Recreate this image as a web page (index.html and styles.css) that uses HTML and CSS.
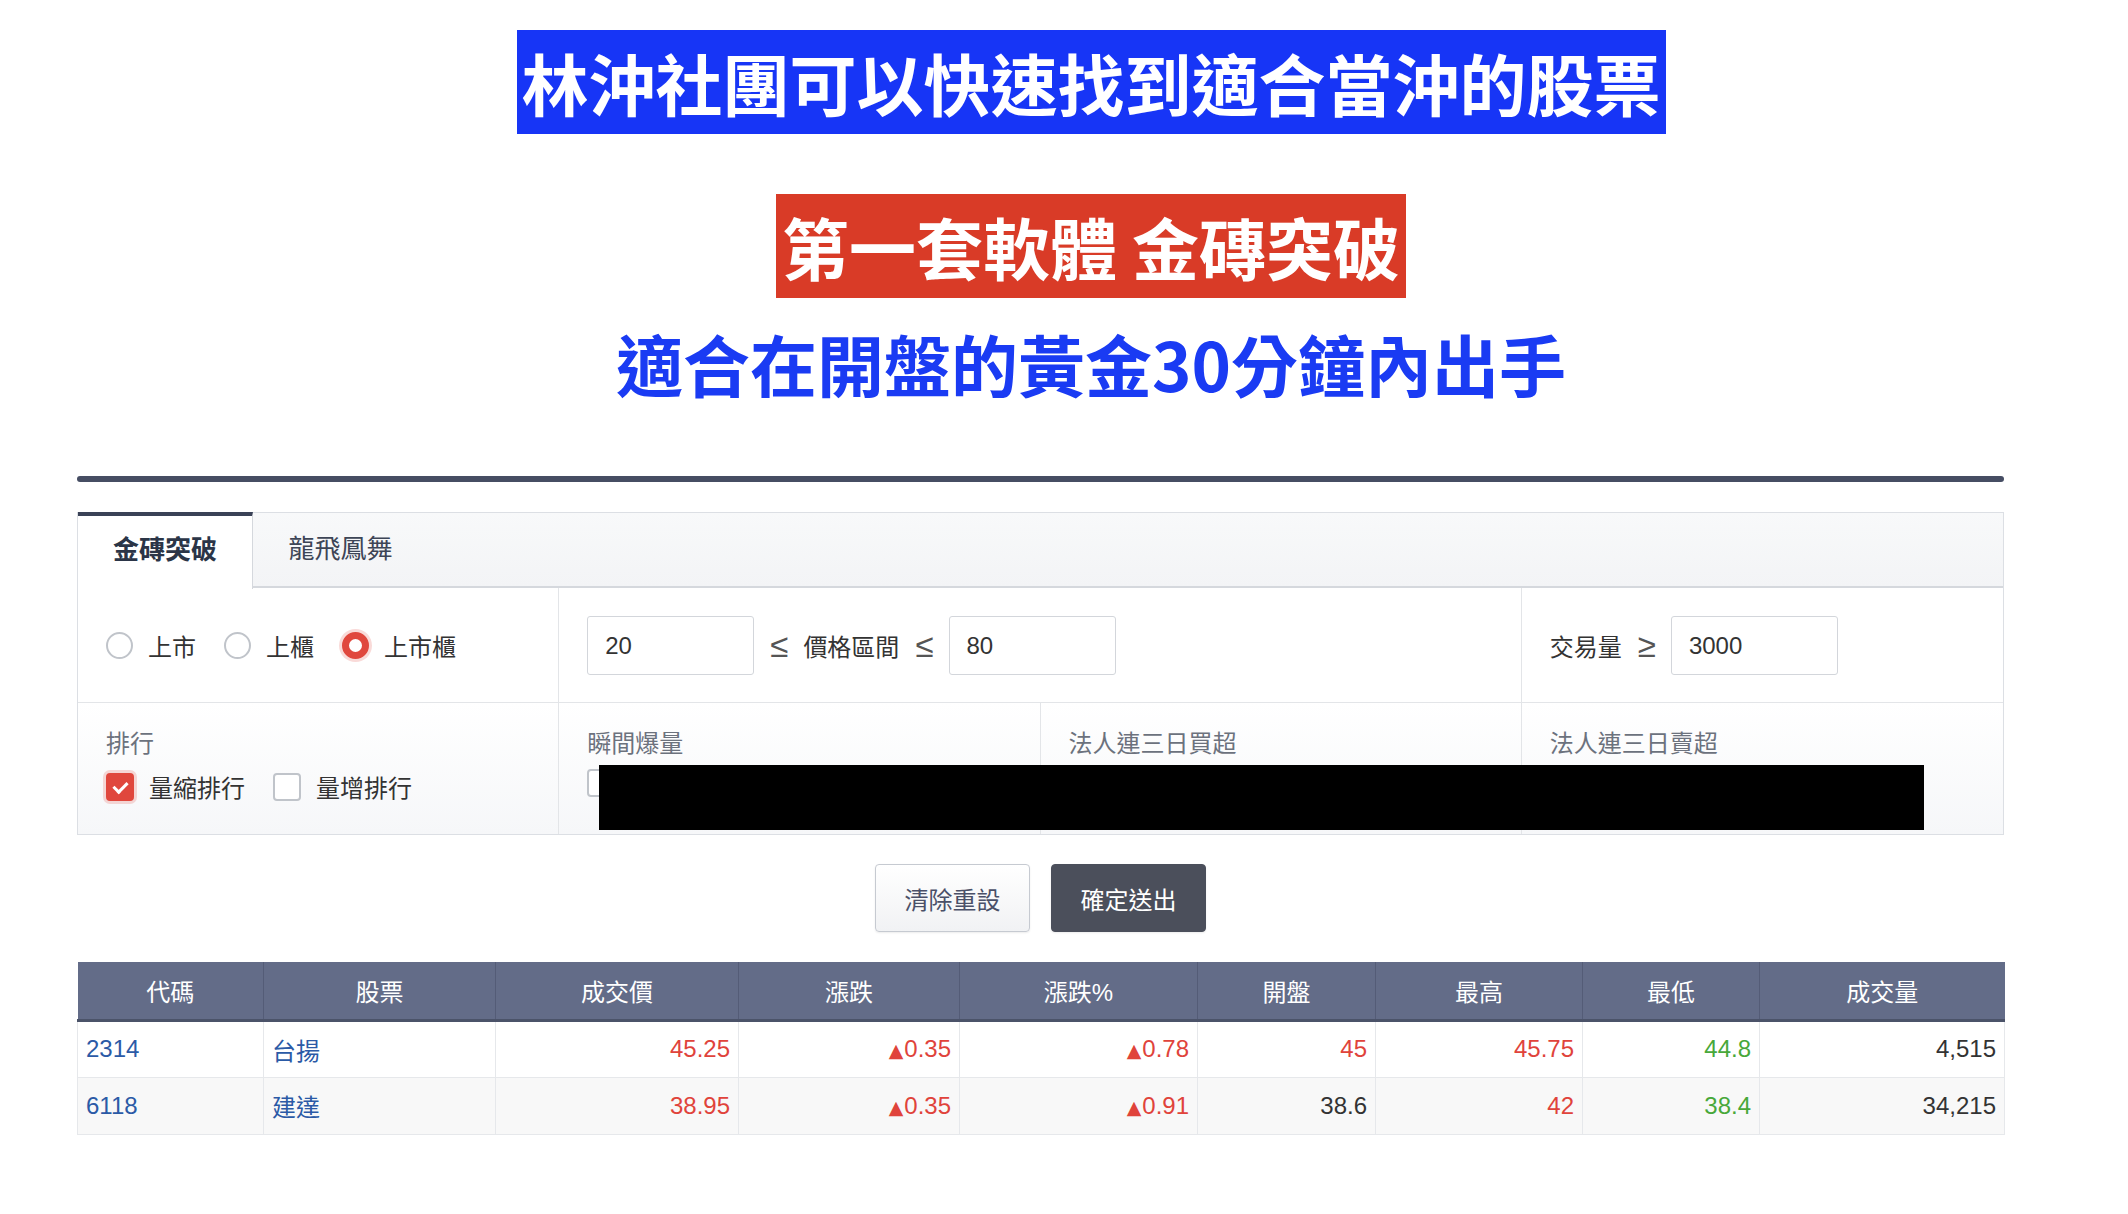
FILE: index.html
```html
<!DOCTYPE html>
<html lang="zh-Hant">
<head>
    <meta charset="UTF-8">
    <meta name="viewport" content="width=device-width, initial-scale=1.0">
    <title>金磚突破 選股</title>
    <link rel="stylesheet" href="styles.css">
</head>
<body>
    <div class="hero">
        <div class="hero-blue">林沖社團可以快速找到適合當沖的股票</div>
        <div class="hero-red">第一套軟體 金磚突破</div>
        <div class="hero-sub">適合在開盤的黃金30分鐘內出手</div>
    </div>

    <div class="wrap">
        <div class="divider"></div>

        <div class="panel">
            <div class="tabs">
                <div class="tab active">金磚突破</div>
                <div class="tab">龍飛鳳舞</div>
            </div>

            <div class="filters">
                <div class="cell">
                    <label class="radio"><span class="dot"></span>上市</label>
                    <label class="radio"><span class="dot"></span>上櫃</label>
                    <label class="radio"><span class="dot on"></span>上市櫃</label>
                </div>
                <div class="cell span2">
                    <div class="field">20</div>
                    <span class="op">≤</span>
                    <span class="txt">價格區間</span>
                    <span class="op">≤</span>
                    <div class="field">80</div>
                </div>
                <div class="cell">
                    <span class="txt">交易量</span>
                    <span class="op">≥</span>
                    <div class="field">3000</div>
                </div>

                <div class="cell sub">
                    <div class="sub-title">排行</div>
                    <div class="checks">
                        <label class="check"><span class="box on"></span>量縮排行</label>
                        <label class="check"><span class="box"></span>量增排行</label>
                    </div>
                </div>
                <div class="cell sub">
                    <div class="sub-title">瞬間爆量</div>
                    <div class="checks">
                        <label class="check"><span class="box"></span></label>
                    </div>
                </div>
                <div class="cell sub">
                    <div class="sub-title">法人連三日買超</div>
                </div>
                <div class="cell sub">
                    <div class="sub-title">法人連三日賣超</div>
                </div>
            </div>

            <!-- redacted area in the original capture -->
            <div class="redact"></div>
        </div>

        <div class="actions">
            <button class="btn">清除重設</button>
            <button class="btn dark">確定送出</button>
        </div>

        <table class="result">
            <colgroup>
                <col style="width:186px">
                <col style="width:232px">
                <col style="width:243px">
                <col style="width:221px">
                <col style="width:238px">
                <col style="width:178px">
                <col style="width:207px">
                <col style="width:177px">
                <col style="width:245px">
            </colgroup>
            <thead>
                <tr>
                    <th>代碼</th>
                    <th>股票</th>
                    <th>成交價</th>
                    <th>漲跌</th>
                    <th>漲跌%</th>
                    <th>開盤</th>
                    <th>最高</th>
                    <th>最低</th>
                    <th>成交量</th>
                </tr>
            </thead>
            <tbody>
                <tr>
                    <td class="link">2314</td>
                    <td class="link">台揚</td>
                    <td class="num up">45.25</td>
                    <td class="num up"><span class="tri">▲</span>0.35</td>
                    <td class="num up"><span class="tri">▲</span>0.78</td>
                    <td class="num up">45</td>
                    <td class="num up">45.75</td>
                    <td class="num down">44.8</td>
                    <td class="num">4,515</td>
                </tr>
                <tr>
                    <td class="link">6118</td>
                    <td class="link">建達</td>
                    <td class="num up">38.95</td>
                    <td class="num up"><span class="tri">▲</span>0.35</td>
                    <td class="num up"><span class="tri">▲</span>0.91</td>
                    <td class="num">38.6</td>
                    <td class="num up">42</td>
                    <td class="num down">38.4</td>
                    <td class="num">34,215</td>
                </tr>
            </tbody>
        </table>
    </div>
</body>
</html>
```

FILE: styles.css
```css
* {
    margin: 0;
    padding: 0;
    box-sizing: border-box;
}

body {
    font-family: "Liberation Sans", "Noto Sans CJK TC", sans-serif;
    background: #fff;
    color: #333;
    width: 2128px;
}

/* headline banners */
.hero {
    display: flex;
    flex-direction: column;
    align-items: center;
    padding-top: 30px;
    padding-left: 54px;
    font-family: "Noto Sans CJK TC", sans-serif;
    font-weight: 700;
    font-size: 67px;
}

.hero-blue {
    background: #1735f6;
    color: #fff;
    line-height: 104px;
    padding: 0 5px;
}

.hero-red {
    background: #d93b27;
    color: #fff;
    line-height: 104px;
    padding: 0 6px;
    margin-top: 60px;
}

.hero-sub {
    color: #1a3bf3;
    line-height: 80px;
    margin-top: 25px;
}

.wrap {
    width: 1927px;
    margin-left: 77px;
}

.divider {
    height: 6px;
    border-radius: 3px;
    background: #464d63;
    margin-top: 73px;
}

/* filter panel */
.panel {
    position: relative;
    margin-top: 30px;
    border: 1px solid #dcdfe4;
    font-size: 24px;
}

.tabs {
    display: flex;
    height: 75px;
    background: linear-gradient(#f8f9fa, #f3f4f6);
    border-bottom: 2px solid #d5d8dd;
}

.tab {
    width: 175px;
    text-align: center;
    line-height: 72px;
    font-size: 26px;
    color: #3d4556;
}

.tab.active {
    background: #fff;
    border-top: 4px solid #3a4257;
    border-right: 1px solid #d5d8dd;
    font-weight: 700;
    color: #2b3547;
    height: 77px;
    margin-top: -1px;
    line-height: 68px;
}

.filters {
    display: grid;
    grid-template-columns: repeat(4, 1fr);
    grid-template-rows: 115px 131px;
}

.cell {
    display: flex;
    align-items: center;
    padding: 0 28px;
    border-right: 1px solid #e3e5e8;
    border-bottom: 1px solid #e3e5e8;
    color: #333;
}

.cell:nth-child(3),
.cell:nth-child(7) {
    border-right: none;
}

.cell.span2 {
    grid-column: span 2;
}

.cell.sub {
    flex-direction: column;
    align-items: flex-start;
    padding-top: 25px;
    border-bottom: none;
    background: linear-gradient(#fff, #f6f7f9);
}

.sub-title {
    color: #6c727d;
    line-height: 32px;
}

.checks {
    display: flex;
    margin-top: 9px;
}

.radio,
.check {
    display: flex;
    align-items: center;
    margin-right: 28px;
    color: #333;
}

.dot {
    width: 27px;
    height: 27px;
    border-radius: 50%;
    border: 2px solid #c0c4ca;
    margin-right: 15px;
    background: #fff;
}

.dot.on {
    border: 7px solid #e0473d;
    box-shadow: 0 0 0 3px rgba(224, 71, 61, 0.2);
}

.box {
    width: 28px;
    height: 28px;
    border-radius: 4px;
    border: 2px solid #c0c4ca;
    margin-right: 15px;
    background: #fff;
    position: relative;
}

.box.on {
    background: #e0473d;
    border-color: #e0473d;
    box-shadow: 0 0 0 3px rgba(224, 71, 61, 0.2);
}

.box.on::after {
    content: "";
    position: absolute;
    left: 8px;
    top: 4px;
    width: 6px;
    height: 11px;
    border: solid #fff;
    border-width: 0 3px 3px 0;
    transform: rotate(45deg);
}

.field {
    width: 167px;
    height: 59px;
    border: 1px solid #d3d6db;
    border-radius: 3px;
    background: #fff;
    padding-left: 17px;
    line-height: 57px;
    color: #333;
}

.op {
    margin: 0 15px 0 16px;
    color: #555;
    font-size: 33px;
    line-height: 1;
}

.txt {
    color: #333;
}

.redact {
    position: absolute;
    left: 521px;
    top: 252px;
    width: 1325px;
    height: 65px;
    background: #000;
}

/* buttons */
.actions {
    display: flex;
    justify-content: center;
    gap: 21px;
    margin-top: 29px;
}

.btn {
    width: 155px;
    height: 68px;
    font-family: "Noto Sans CJK TC", sans-serif;
    font-size: 24px;
    border-radius: 4px;
    border: 1px solid #c6cad1;
    background: linear-gradient(#fff, #f1f2f4);
    color: #4a5068;
    box-shadow: 0 1px 2px rgba(0, 0, 0, 0.08);
}

.btn.dark {
    background: #4b4f5b;
    border-color: #4b4f5b;
    color: #fff;
}

/* result table */
.result {
    margin-top: 30px;
    width: 1927px;
    table-layout: fixed;
    border-collapse: collapse;
    font-size: 24px;
}

.result th {
    height: 58px;
    background: #636c88;
    color: #fff;
    font-weight: 400;
    border-left: 1px solid #545c77;
    border-bottom: 3px solid #4b5369;
}

.result th:first-child {
    border-left: none;
}

.result td {
    height: 57px;
    padding: 0 8px;
    border: 1px solid #e6e8eb;
}

.result tbody tr:nth-child(2) td {
    background: #f8f8f8;
}

.link {
    color: #2b5aa6;
}

.num {
    text-align: right;
}

.up {
    color: #e0433b;
}

.down {
    color: #48a83a;
}

.tri {
    font-family: "DejaVu Sans", sans-serif;
    font-size: 19px;
    margin-right: 1px;
}
```
